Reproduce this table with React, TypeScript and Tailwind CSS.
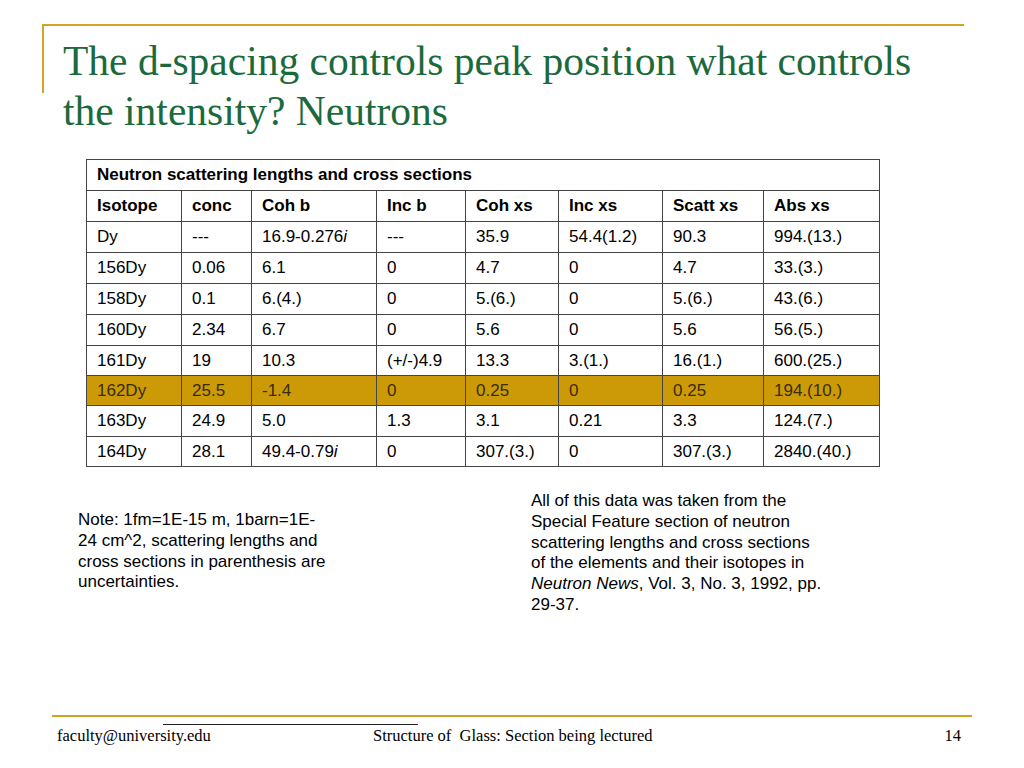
import React from "react";

type Row = { cells: React.ReactNode[]; h: string; hl?: boolean };

const widths = ["w-[95px]", "w-[70px]", "w-[125px]", "w-[89px]", "w-[93px]", "w-[104px]", "w-[101px]", "w-[116px]"];

const rows: Row[] = [
  { cells: ["Dy", "---", <>16.9-0.276<i>i</i></>, "---", "35.9", "54.4(1.2)", "90.3", "994.(13.)"], h: "h-[31px]" },
  { cells: ["156Dy", "0.06", "6.1", "0", "4.7", "0", "4.7", "33.(3.)"], h: "h-[31px]" },
  { cells: ["158Dy", "0.1", "6.(4.)", "0", "5.(6.)", "0", "5.(6.)", "43.(6.)"], h: "h-[31px]" },
  { cells: ["160Dy", "2.34", "6.7", "0", "5.6", "0", "5.6", "56.(5.)"], h: "h-[31px]" },
  { cells: ["161Dy", "19", "10.3", "(+/-)4.9", "13.3", "3.(1.)", "16.(1.)", "600.(25.)"], h: "h-[30px]" },
  { cells: ["162Dy", "25.5", "-1.4", "0", "0.25", "0", "0.25", "194.(10.)"], h: "h-[30px]", hl: true },
  { cells: ["163Dy", "24.9", "5.0", "1.3", "3.1", "0.21", "3.3", "124.(7.)"], h: "h-[31px]" },
  { cells: ["164Dy", "28.1", <>49.4-0.79<i>i</i></>, "0", "307.(3.)", "0", "307.(3.)", "2840.(40.)"], h: "h-[30px]" },
];

const headers = ["Isotope", "conc", "Coh b", "Inc b", "Coh xs", "Inc xs", "Scatt xs", "Abs xs"];

export default function App() {
  return (
    <div className="w-[1024px] h-[768px] bg-white flex flex-col overflow-hidden" style={{ fontFamily: '"Liberation Sans", Arial, sans-serif' }}>
      {/* Title block */}
      <div className="ml-[42px] mt-[24px] w-[922px] border-t-2 border-[#d4a226] flex items-start">
        <div className="w-[2px] h-[67px] bg-[#d4a226] shrink-0" />
        <h1
          className="pl-[19px] mt-[10px] text-[41.5px] leading-[50px] text-[#1b6a3c] whitespace-nowrap"
          style={{ fontFamily: '"Liberation Serif", "Times New Roman", serif' }}
        >
          The d-spacing controls peak position what controls
          <br />
          the intensity? Neutrons
        </h1>
      </div>

      {/* Table */}
      <table className="ml-[86px] mt-[23px] w-[793px] border-collapse text-[17px] leading-[20px] text-black table-fixed">
        <colgroup>
          {widths.map((w, i) => (
            <col key={i} className={w} />
          ))}
        </colgroup>
        <tbody>
          <tr className="h-[31px]">
            <td colSpan={8} className="border border-[#444] pl-[10px] font-bold align-middle whitespace-nowrap">
              Neutron scattering lengths and cross sections
            </td>
          </tr>
          <tr className="h-[31px]">
            {headers.map((h) => (
              <td key={h} className="border border-[#444] pl-[10px] font-bold align-middle whitespace-nowrap">
                {h}
              </td>
            ))}
          </tr>
          {rows.map((r, ri) => (
            <tr key={ri} className={`${r.h} ${r.hl ? "bg-[#cc9a06] text-[#3a2c05]" : ""}`}>
              {r.cells.map((c, ci) => (
                <td key={ci} className="border border-[#444] pl-[10px] align-middle whitespace-nowrap">
                  {c}
                </td>
              ))}
            </tr>
          ))}
        </tbody>
      </table>

      {/* Notes */}
      <div className="flex items-start mt-[24px] text-[17px] leading-[20.8px] text-black">
        <div className="ml-[78px] mt-[19px] w-[453px] shrink-0 whitespace-nowrap">
          <div>Note: 1fm=1E-15 m, 1barn=1E-</div>
          <div>24 cm^2, scattering lengths and</div>
          <div>cross sections in parenthesis are</div>
          <div>uncertainties.</div>
        </div>
        <div className="whitespace-nowrap">
          <div>All of this data was taken from the</div>
          <div>Special Feature section of neutron</div>
          <div>scattering lengths and cross sections</div>
          <div>of the elements and their isotopes in</div>
          <div>
            <i>Neutron News</i>, Vol. 3, No. 3, 1992, pp.
          </div>
          <div>29-37.</div>
        </div>
      </div>

      {/* Footer */}
      <div className="mt-auto mb-[22px]" style={{ fontFamily: '"Liberation Serif", "Times New Roman", serif' }}>
        <div className="ml-[52px] w-[920px] h-[2px] bg-[#d4a226]" />
        <div className="ml-[163px] w-[255px] h-px bg-[#222] mt-[7px]" />
        <div className="mt-[1px] h-[20px] flex items-center text-[16.5px] leading-[20px] text-black">
          <div className="pl-[57px] w-[373px] shrink-0">faculty@university.edu</div>
          <div className="flex-1 whitespace-pre">Structure of  Glass: Section being lectured</div>
          <div className="pr-[63px]">14</div>
        </div>
      </div>
    </div>
  );
}
